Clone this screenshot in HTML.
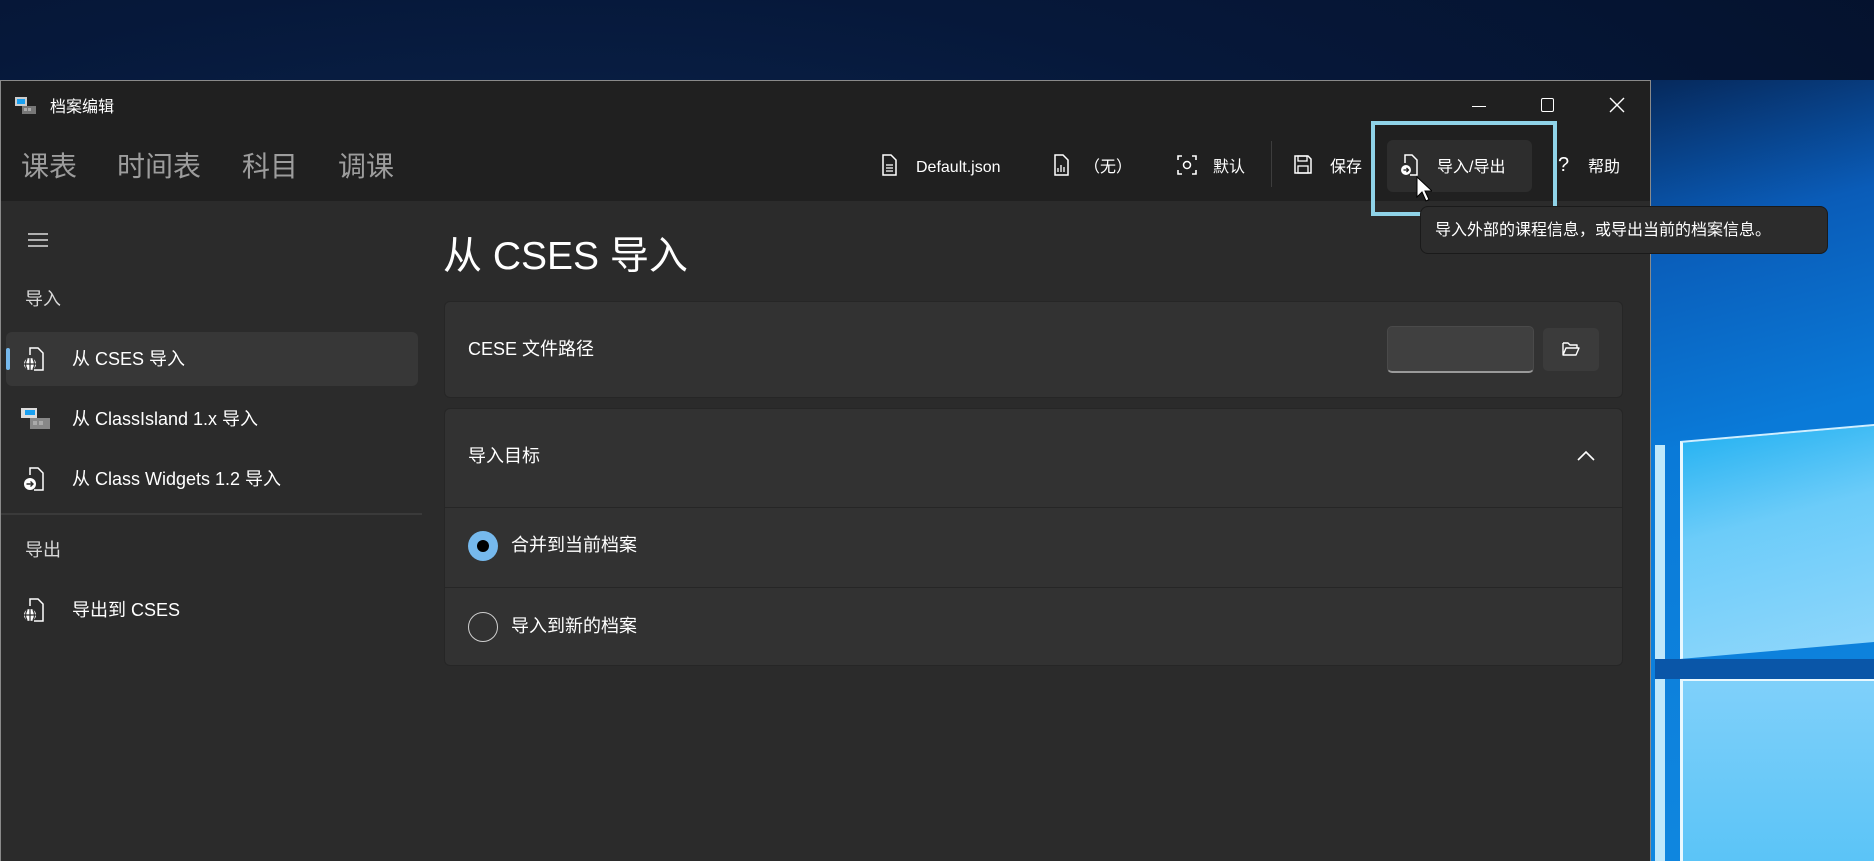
<!DOCTYPE html>
<html><head><meta charset="utf-8"><style>
*{margin:0;padding:0;box-sizing:border-box}
body{width:1874px;height:861px;overflow:hidden;position:relative;font-family:"Liberation Sans","Noto Sans CJK SC",sans-serif;color:#fff;background:#061530}
.a{position:absolute}
.desk{left:0;top:0;width:1874px;height:861px;background:radial-gradient(ellipse at 30% 40%,#0d2a55 0%,#06183a 50%,#041029 100%)}
.blue{left:1640px;top:80px;width:234px;height:781px;background:linear-gradient(165deg,#06285a 0%,#0a5cb8 20%,#0a7ad8 45%,#1088e0 100%)}
.pane1{left:1680px;top:441px;width:194px;height:218px;background:linear-gradient(170deg,#2bb4f2 0%,#6cccf9 40%,#8dd6fb 100%);border-left:3px solid #e8f8ff;border-top:2px solid #cfefff;transform:skewY(-5deg);transform-origin:left top}
.pane2{left:1680px;top:679px;width:194px;height:182px;background:linear-gradient(180deg,#7fd0fa,#5bc4f7);border-left:3px solid #e8f8ff;border-top:2px solid #e8f8ff}
.pane0{left:1655px;top:445px;width:10px;height:416px;background:#bfe8fb}
.bar{left:1655px;top:659px;width:219px;height:20px;background:#0a56a8}
.win{left:0;top:80px;width:1651px;height:781px;background:#2b2b2b;border:1px solid #8a8a8a;border-bottom:none}
.hdr{left:0;top:0;width:1649px;height:120px;background:#202020}
.tab{top:64px;font-size:28px;color:#9d9d9d}
.tb{top:75px;height:24px;line-height:24px;font-size:16px;color:#fff}
.side{color:#fff;font-size:18px}
.lbl{font-size:18px;color:#d8d8d8}
.card{background:#323232;border:1px solid #262626;border-radius:6px}
</style></head><body>
<div class="a desk"></div>
<div class="a blue"></div>
<div class="a pane0"></div>
<div class="a pane1"></div>
<div class="a bar"></div>
<div class="a pane2"></div>

<div class="a win">
 <div class="a hdr"></div>
 <svg class="a" style="left:14px;top:16px" width="22" height="18" viewBox="0 0 22 18"><rect x="0" y="0" width="12" height="9" fill="#ccc"/><rect x="2" y="2" width="8" height="5" fill="#1aa0f0"/><rect x="7" y="9" width="14" height="8" fill="#777"/><rect x="9" y="11" width="3" height="3" fill="#aaa"/><rect x="13" y="11" width="3" height="3" fill="#aaa"/></svg>
 <div class="a" style="left:49px;top:12px;font-size:16px">档案编辑</div>
 <div class="a" style="left:1471px;top:25px;width:14px;height:1px;background:#fff"></div>
 <div class="a" style="left:1540px;top:17px;width:13px;height:14px;border:1.5px solid #fff;border-radius:2px"></div>
 <svg class="a" style="left:1608px;top:16px" width="16" height="16"><path d="M1 1L15 15M15 1L1 15" stroke="#fff" stroke-width="1.4"/></svg>
 <div class="a tab" style="left:20px">课表</div>
 <div class="a tab" style="left:116px">时间表</div>
 <div class="a tab" style="left:241px">科目</div>
 <div class="a tab" style="left:337px">调课</div>
 <svg class="a" style="left:880px;top:73px" width="16" height="22" viewBox="0 0 16 22"><path d="M2 1h8l5 5v15H2z" fill="none" stroke="#fff" stroke-width="1.5"/><path d="M5 11h7M5 14h7M5 17h7" stroke="#fff" stroke-width="1.3"/></svg>
 <div class="a tb" style="left:915px">Default.json</div>
 <svg class="a" style="left:1052px;top:73px" width="16" height="22" viewBox="0 0 16 22"><path d="M2 1h8l5 5v15H2z" fill="none" stroke="#fff" stroke-width="1.5"/><path d="M5 18v-4M8 18v-7M11 18v-5" stroke="#fff" stroke-width="1.3"/></svg>
 <div class="a tb" style="left:1083px">（无）</div>
 <svg class="a" style="left:1176px;top:74px" width="20" height="20" viewBox="0 0 20 20"><path d="M1 5V1h4M15 1h4v4M19 15v4h-4M5 19H1v-4" stroke="#fff" stroke-width="1.6" fill="none"/><circle cx="10" cy="10" r="3.5" stroke="#fff" stroke-width="1.5" fill="none"/></svg>
 <div class="a tb" style="left:1212px">默认</div>
 <div class="a" style="left:1270px;top:60px;width:1px;height:46px;background:#3d3d3d"></div>
 <svg class="a" style="left:1293px;top:74px" width="18" height="19" viewBox="0 0 18 19"><path d="M1 1h13l3 3v14H1z" fill="none" stroke="#fff" stroke-width="1.5"/><rect x="4" y="1" width="9" height="5" fill="none" stroke="#fff" stroke-width="1.3"/><rect x="4" y="11" width="10" height="7" fill="none" stroke="#fff" stroke-width="1.3"/></svg>
 <div class="a tb" style="left:1329px">保存</div>
 <div class="a" style="left:1386px;top:59px;width:145px;height:52px;background:#2d2d2d;border-radius:6px"></div>
 <svg class="a" style="left:1399px;top:73px" width="18" height="22" viewBox="0 0 18 22"><path d="M5 9V1h7l5 5v15H10" fill="none" stroke="#fff" stroke-width="1.5"/><circle cx="6" cy="16" r="5" fill="#fff"/><path d="M3.5 16h5M6.5 14l2 2-2 2" stroke="#202020" stroke-width="1.3" fill="none"/></svg>
 <div class="a tb" style="left:1436px">导入/导出</div>
 <div class="a tb" style="left:1557px;font-size:20px;top:72px">?</div>
 <div class="a tb" style="left:1587px">帮助</div>
 <svg class="a" style="left:27px;top:152px" width="20" height="14"><path d="M0 1h20M0 7h20M0 13h20" stroke="#fff" stroke-width="1.3"/></svg>
 <div class="a lbl" style="left:24px;top:204px">导入</div>
 <div class="a" style="left:5px;top:251px;width:412px;height:54px;background:#373737;border-radius:6px"></div>
 <div class="a" style="left:5px;top:267px;width:4px;height:22px;background:#76b9ed;border-radius:2px"></div>
 <svg class="a" style="left:22px;top:266px" width="22" height="24" viewBox="0 0 22 24"><path d="M7 8V1h8l5 5v17H11" fill="none" stroke="#fff" stroke-width="1.5"/><circle cx="7" cy="17" r="6" fill="#fff"/><path d="M1 17h12M7 11v12M4 12c-2 4-2 7 0 10M10 12c2 4 2 7 0 10" stroke="#2b2b2b" stroke-width="1.2" fill="none"/></svg>
 <div class="a side" style="left:71px;top:264px">从 CSES 导入</div>
 <svg class="a" style="left:20px;top:327px" width="30" height="22" viewBox="0 0 30 22"><rect x="0" y="0" width="16" height="10" fill="#ddd"/><rect x="4" y="2" width="10" height="5" fill="#1aa0f0"/><rect x="9" y="10" width="20" height="11" fill="#888"/><rect x="12" y="13" width="4" height="4" fill="#aaa"/><rect x="18" y="13" width="4" height="4" fill="#aaa"/></svg>
 <div class="a side" style="left:71px;top:324px">从 ClassIsland 1.x 导入</div>
 <svg class="a" style="left:22px;top:386px" width="22" height="24" viewBox="0 0 22 24"><path d="M7 8V1h8l5 5v17H11" fill="none" stroke="#fff" stroke-width="1.5"/><circle cx="7" cy="17" r="6" fill="#fff"/><path d="M3.5 17h6M7.5 14.5l2.5 2.5-2.5 2.5" stroke="#2b2b2b" stroke-width="1.4" fill="none"/></svg>
 <div class="a side" style="left:71px;top:384px">从 Class Widgets 1.2 导入</div>
 <div class="a" style="left:0;top:432px;width:421px;height:2px;background:#3a3a3a"></div>
 <div class="a lbl" style="left:24px;top:455px">导出</div>
 <svg class="a" style="left:22px;top:517px" width="22" height="24" viewBox="0 0 22 24"><path d="M7 8V1h8l5 5v17H11" fill="none" stroke="#fff" stroke-width="1.5"/><circle cx="7" cy="17" r="6" fill="#fff"/><path d="M1 17h12M7 11v12M4 12c-2 4-2 7 0 10M10 12c2 4 2 7 0 10" stroke="#2b2b2b" stroke-width="1.2" fill="none"/></svg>
 <div class="a side" style="left:71px;top:515px">导出到 CSES</div>
 <div class="a" style="left:442px;top:144px;font-size:39px">从 CSES 导入</div>
 <div class="a card" style="left:443px;top:220px;width:1179px;height:97px"></div>
 <div class="a" style="left:467px;top:254px;font-size:18px">CESE 文件路径</div>
 <div class="a" style="left:1386px;top:245px;width:147px;height:47px;background:#404040;border:1px solid #4a4a4a;border-bottom:2px solid #9a9a9a;border-radius:5px"></div>
 <div class="a" style="left:1542px;top:247px;width:56px;height:43px;background:#3b3b3b;border-radius:5px"></div>
 <svg class="a" style="left:1561px;top:260px" width="18" height="16" viewBox="0 0 18 16"><path d="M1 2h5l2 2h7v3M1 2v12h13l3-7H4L1 14" fill="none" stroke="#fff" stroke-width="1.4" stroke-linejoin="round"/></svg>
 <div class="a card" style="left:443px;top:327px;width:1179px;height:258px"></div>
 <div class="a" style="left:444px;top:426px;width:1177px;height:1px;background:#262626"></div>
 <div class="a" style="left:444px;top:506px;width:1177px;height:1px;background:#262626"></div>
 <div class="a" style="left:467px;top:361px;font-size:18px">导入目标</div>
 <svg class="a" style="left:1576px;top:369px" width="18" height="11"><path d="M1 10L9 2l8 8" stroke="#fff" stroke-width="1.6" fill="none"/></svg>
 <div class="a" style="left:467px;top:450px;width:30px;height:30px;border-radius:50%;background:#76b9ed"></div>
 <div class="a" style="left:476px;top:459px;width:12px;height:12px;border-radius:50%;background:#000"></div>
 <div class="a" style="left:510px;top:450px;font-size:18px">合并到当前档案</div>
 <div class="a" style="left:467px;top:531px;width:30px;height:30px;border-radius:50%;border:1.5px solid #cfcfcf"></div>
 <div class="a" style="left:510px;top:531px;font-size:18px">导入到新的档案</div>
</div>

<div class="a" style="left:1371px;top:121px;width:186px;height:95px;border:4px solid #8fd3e8"></div>
<div class="a" style="left:1420px;top:206px;width:408px;height:48px;background:#2c2c2c;border:1px solid #1a1a1a;border-radius:8px"></div>
<div class="a" style="left:1435px;top:216px;font-size:16px">导入外部的课程信息，或导出当前的档案信息。</div>
<svg class="a" style="left:1416px;top:176px" width="16" height="26" viewBox="0 0 16 26"><path d="M1 1v20l5-5 4 9 3-1.5-4-8.5h7z" fill="#fff" stroke="#000" stroke-width="1"/></svg>
</body></html>
